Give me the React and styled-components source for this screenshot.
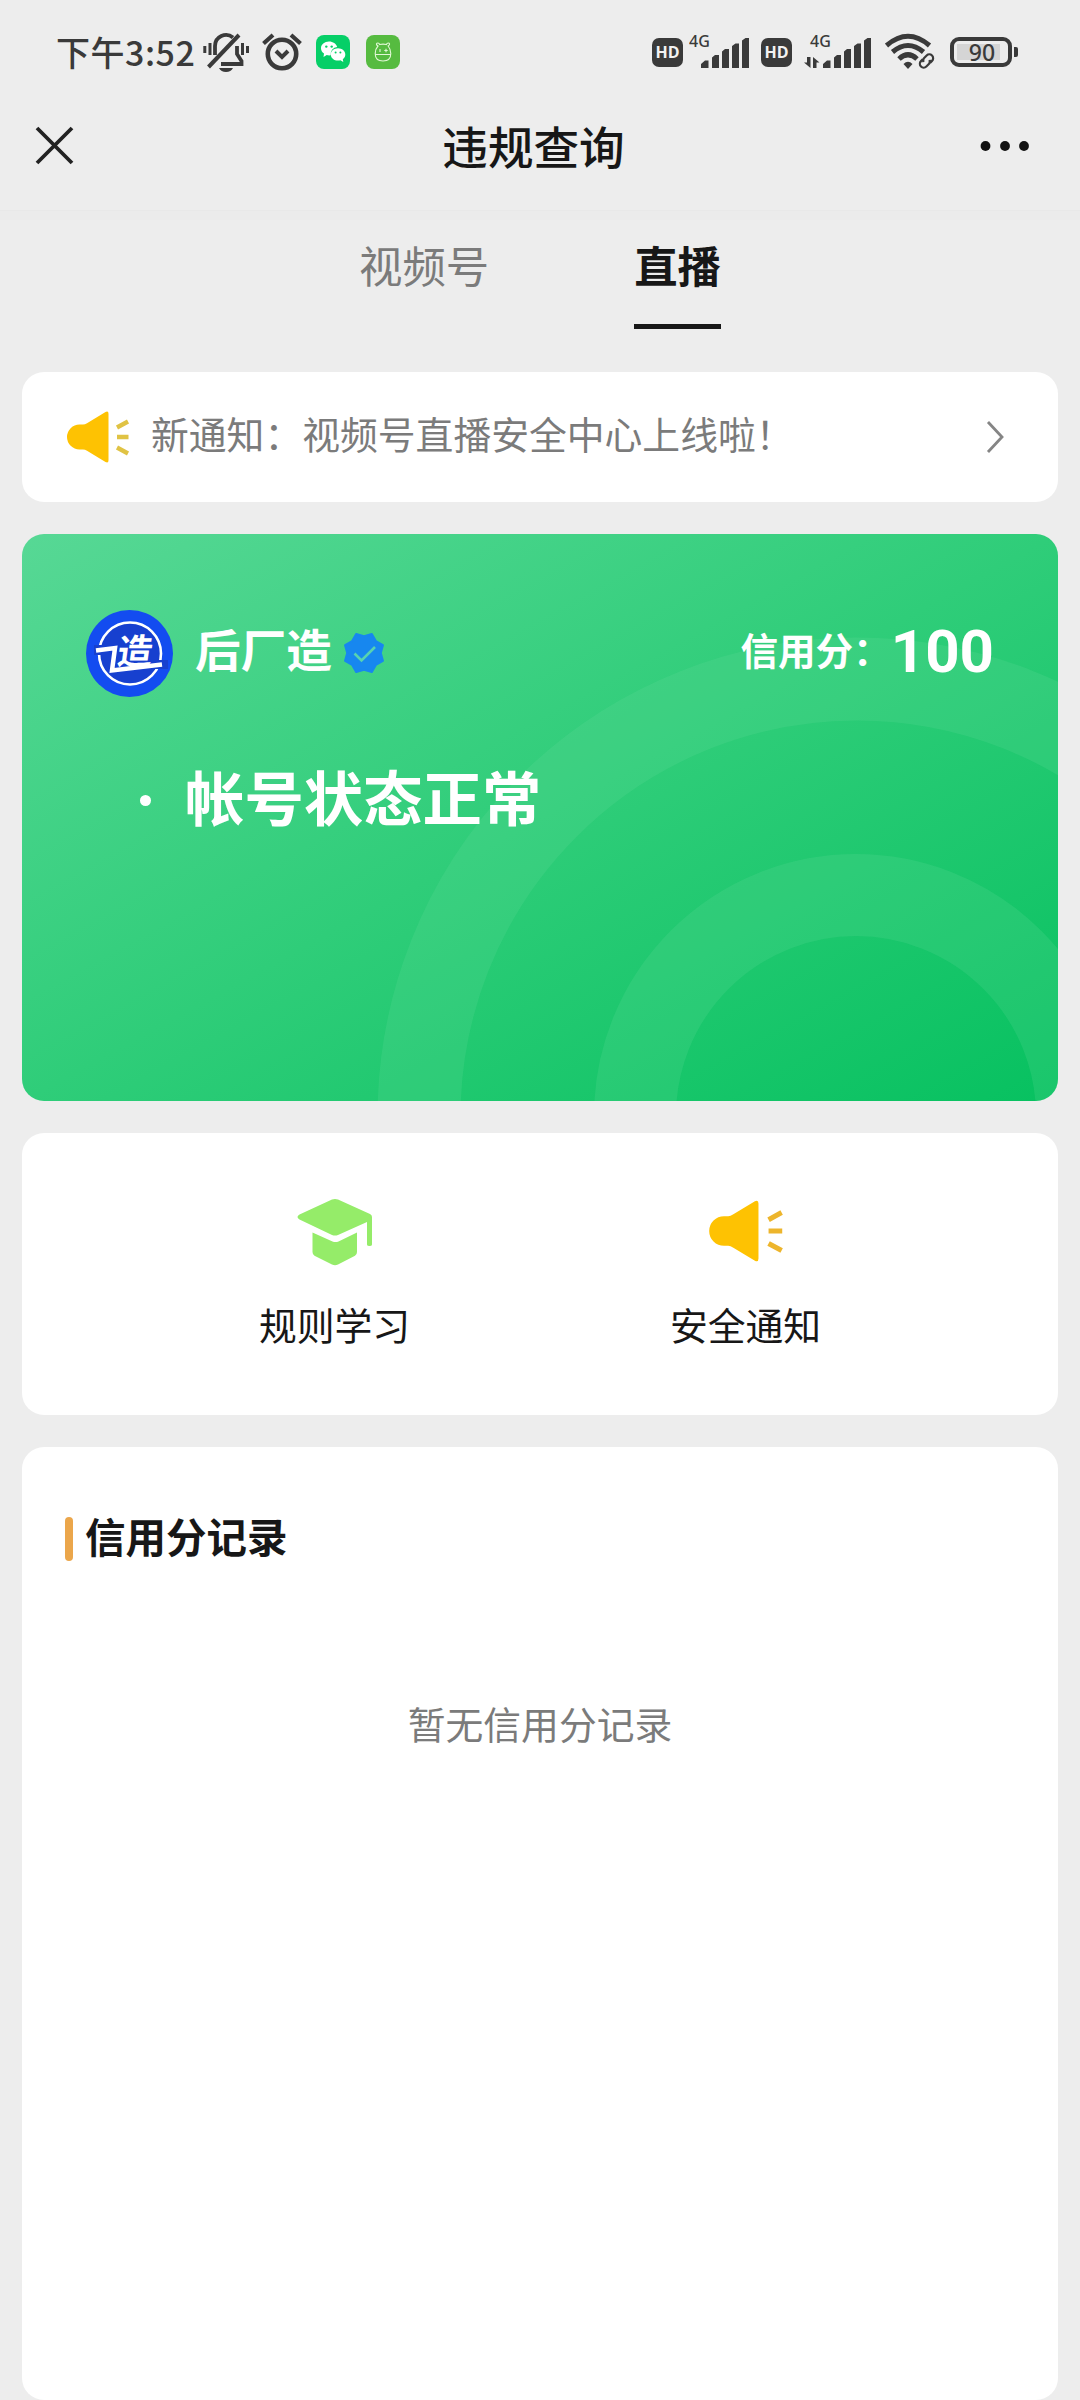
import React from "react";
import styled, { createGlobalStyle } from "styled-components";

const GlobalStyle = createGlobalStyle`
  * {
    box-sizing: border-box;
  }

  body {
    margin: 0;
    background-color: #ededed;
    font-family: "Noto Sans CJK SC", sans-serif;
    color: #171717;
  }
`;

const Page = styled.div`
  width: 1080px;
  height: 2400px;
  overflow: hidden;
  background-color: #ededed;
`;

const StatusBar = styled.div`
  display: flex;
  justify-content: space-between;
  height: 104px;
  padding: 0 62px 0 56px;
  color: #3a3a3a;
`;

const StatusGroup = styled.div`
  display: flex;
  align-items: center;
  height: 104px;
`;

const Time = styled.span`
  width: 147px;
  font-size: 34px;
  font-weight: 500;
  letter-spacing: 0.5px;
  line-height: 1;
  white-space: nowrap;
`;

const StatusIcon = styled.svg`
  display: block;
  flex: none;
  margin-left: ${({ $gap }) => $gap || 0}px;
`;

const HdBadge = styled.span`
  width: 31px;
  height: 29px;
  margin-left: ${({ $gap }) => $gap || 0}px;
  border-radius: 7px;
  background-color: #3a3a3a;
  color: #f2f2f2;
  font-family: "Open Sans", sans-serif;
  font-size: 16px;
  font-weight: 700;
  line-height: 29px;
  text-align: center;
`;

const Battery = styled.span`
  width: 62px;
  height: 30px;
  margin-left: 15px;
  padding: 3px 7px 3px 3px;
  border: 4px solid #3a3a3a;
  border-radius: 9px;
`;

const BatteryLevel = styled.span`
  display: block;
  width: 50px;
  height: 16px;
  background: linear-gradient(90deg, #d5d5d5 43px, transparent 43px);
  font-family: "Noto Sans", sans-serif;
  font-size: 23px;
  font-weight: 500;
  line-height: 16px;
  text-align: center;
`;

const BatteryCap = styled.span`
  width: 4px;
  height: 10px;
  margin-left: 2px;
  border-radius: 0 2px 2px 0;
  background-color: #3a3a3a;
`;

const NavBar = styled.header`
  display: flex;
  align-items: center;
  justify-content: space-between;
  height: 106px;
  padding: 0 50px 23px 35px;
`;

const NavTitle = styled.h1`
  margin: 0 0 0 13px;
  font-size: 45.6px;
  font-weight: 500;
  line-height: 1;
`;

const Divider = styled.div`
  height: 10px;
  border-top: 1px solid #e8e8e8;
  background-color: #ebebeb;
`;

const Tabs = styled.nav`
  display: flex;
  justify-content: center;
  gap: 145px;
  height: 152px;
  padding-top: 23px;
`;

const Tab = styled.div`
  height: 86px;
  border-bottom: 5px solid ${({ $active }) => ($active ? "#171717" : "transparent")};
  color: ${({ $active }) => ($active ? "#171717" : "#7b7b7b")};
  font-size: 43.4px;
  font-weight: ${({ $active }) => ($active ? 700 : 400)};
  line-height: 43px;
`;

const Content = styled.main`
  display: flex;
  flex-direction: column;
  gap: 32px;
  padding: 0 22px;
`;

const Card = styled.section`
  border-radius: 22px;
  background-color: #fff;
`;

const Notice = styled(Card)`
  display: flex;
  align-items: center;
  height: 130px;
  padding: 0 53px 0 44px;
`;

const NoticeText = styled.p`
  flex: 1;
  margin: 0 0 8px 21px;
  color: #7b7b7b;
  font-size: 37.8px;
  line-height: 1;
`;

const StatusCard = styled(Card)`
  position: relative;
  height: 567px;
  padding: 73px 64px 0 64px;
  overflow: hidden;
  background: linear-gradient(to bottom right, #57d895 0%, #2fcd79 50%, #07c160 100%);
  color: #fff;
`;

const Rings = styled.svg`
  position: absolute;
  inset: 0;
`;

const Account = styled.div`
  position: relative;
  display: flex;
  align-items: center;
  height: 92px;
`;

const AccountName = styled.span`
  margin: 0 11px 8px 22px;
  font-size: 45.6px;
  font-weight: 700;
  line-height: 1;
`;

const ScoreLabel = styled.span`
  margin: 0 0 9px auto;
  font-size: 37.6px;
  font-weight: 700;
  line-height: 1;
`;

const Score = styled.span`
  margin-bottom: 2px;
  font-family: Roboto, sans-serif;
  font-size: 60px;
  font-weight: 700;
  line-height: 1;
`;

const AccountStatus = styled.div`
  position: relative;
  display: flex;
  align-items: center;
  gap: 34px;
  margin: 58px 0 0 54px;
  font-size: 59.4px;
  font-weight: 700;
  line-height: 76px;
`;

const Dot = styled.span`
  width: 11px;
  height: 11px;
  margin-top: 10px;
  border-radius: 50%;
  background-color: #fff;
`;

const Menu = styled(Card)`
  display: flex;
  height: 282px;
  padding: 63px 107px 0;
`;

const MenuItem = styled.div`
  display: flex;
  flex: 1;
  flex-direction: column;
  align-items: center;
  gap: 28px;
  font-size: 37.8px;
  line-height: 60px;
`;

const Records = styled(Card)`
  height: 953px;
  padding: 64px 43px 0;
`;

const RecordsTitle = styled.h2`
  display: flex;
  align-items: center;
  gap: 12px;
  margin: 0;
  font-size: 40.5px;
  font-weight: 700;
  line-height: 50px;
`;

const Marker = styled.span`
  width: 8px;
  height: 44px;
  margin-top: 6px;
  border-radius: 4px;
  background-color: #eba64b;
`;

const Empty = styled.p`
  margin: 134px 0 0;
  color: #7b7b7b;
  font-size: 37.8px;
  line-height: 56px;
  text-align: center;
`;

function MutedBell() {
  return (
    <StatusIcon width="46" height="40" viewBox="0 0 46 40" fill="none" stroke="#3a3a3a" strokeWidth="3.8">
      <path d="M12 23V14a11 11 0 0 1 18-8.500M34 14v8l4.500 7v3H18" />
      <path d="M5.500 35 36 3" strokeWidth="4" />
      <path d="M1.800 14v7M7 11v12M39.500 11v12M44.500 14v7" strokeWidth="3" />
      <path d="M16 36h14q-2 4-7 4t-7-4Z" fill="#3a3a3a" stroke="none" />
    </StatusIcon>
  );
}

function AlarmClock() {
  return (
    <StatusIcon $gap={13} width="40" height="38" viewBox="0 0 40 38" fill="none" stroke="#3a3a3a">
      <circle cx="20" cy="21" r="14.200" strokeWidth="4.600" />
      <path d="M1.500 10.500 11 2M38.500 10.500 29 2" strokeWidth="4.200" />
      <path d="m14 18 6 6 6-6" strokeWidth="4" />
    </StatusIcon>
  );
}

function ChatApp() {
  return (
    <StatusIcon $gap={14} width="34" height="34" viewBox="0 0 34 34">
      <rect width="34" height="34" rx="8" fill="#06cf67" />
      <path d="M13 6.500C8.500 6.500 5 9.500 5 13.200c0 2.200 1.100 4.100 3 5.300L7.500 22l3.200-1.900c1.200.3 2.800.4 4 .2A7 7 0 0 1 21.200 12C20.200 8.800 17 6.500 13 6.500Z" fill="#fff" />
      <path d="M22 13.200c-4 0-7.200 2.800-7.200 6.200s3.200 6.200 7.200 6.200c.8 0 1.700-.1 2.400-.4l2.900 1.700-.5-2.700c1.500-1.200 2.500-2.900 2.500-4.800 0-3.400-3.300-6.200-7.300-6.200Z" fill="#fff" />
      <g fill="#06cf67">
        <circle cx="10.300" cy="11.600" r="1.200" />
        <circle cx="15.700" cy="11.600" r="1.200" />
        <circle cx="19.600" cy="17.600" r="1" />
        <circle cx="24.400" cy="17.600" r="1" />
      </g>
    </StatusIcon>
  );
}

function BearApp() {
  return (
    <StatusIcon $gap={16} width="34" height="34" viewBox="0 0 34 34">
      <rect width="34" height="34" rx="8" fill="#56bb40" />
      <g fill="none" stroke="#e2f8d6" strokeWidth="1.100">
        <path d="M12 11q-2.500-1.500-1-2.800 2-.6 2.600 1.300 3.500-.8 6.800 0 .8-1.900 2.700-1.300 1.300 1.400-1 2.800 2.700 3 2.700 7.500c0 5-3.300 7.500-7.800 7.500s-7.800-2.500-7.800-7.500q0-4.500 2.800-7.500ZM9.500 19.500h15" />
        <path d="M14 14v3M20 13.800v3.400M18.300 15.500h3.400" />
      </g>
    </StatusIcon>
  );
}

function Signal({ gap, data }) {
  const left = data ? 19 : 12;
  return (
    <StatusIcon $gap={gap} width={left + 48} height="52" viewBox={`0 -9 ${left + 48} 52`} fill="#3a3a3a">
      <text x={data ? 6 : 0} y="12" fontFamily="Noto Sans" fontSize="16" fontWeight="500">
        4G
      </text>
      {data && (
        <path d="M6.500 33 0 27.500h3V22h3.500ZM9 33V22l6.500 5.500h-3V33Z" />
      )}
      <g transform={`translate(${left} 0)`}>
        <path d="M0 33v-4l4-3.500h3.500V33ZM11 33V22.500l3-2.500h4v13ZM21 33V16.500l3-2.500h4v19ZM31 33V11l3.500-2.500H38V33ZM41 33V5.500L44.500 3H48v30Z" />
      </g>
    </StatusIcon>
  );
}

function Wifi() {
  return (
    <StatusIcon $gap={14} width="50" height="38" viewBox="0 0 50 38" fill="none" stroke="#3a3a3a">
      <path d="M1.500 12.500Q23-6 44.500 12.500" strokeWidth="5" />
      <path d="M7.500 19q15.500-13 31 0" strokeWidth="5" />
      <path d="M14 26q9-8.500 18 0" strokeWidth="5" />
      <path d="M18.500 31q4.500-4.500 9 0L23 36Z" fill="#3a3a3a" stroke="none" />
      <g strokeWidth="2.200" transform="rotate(-45 41.500 28)">
        <path d="M40 24.200h-2.500a3.800 3.800 0 0 0 0 7.600h3.500q2.500 0 3.200-2.500M43 31.800h2.500a3.800 3.800 0 0 0 0-7.600H42q-2.500 0-3.200 2.500" />
      </g>
    </StatusIcon>
  );
}

function CloseIcon() {
  return (
    <svg width="39" height="39" viewBox="0 0 39 39" stroke="#222" strokeWidth="3.800">
      <path d="m2 2 35 35M37 2 2 37" />
    </svg>
  );
}

function MoreIcon() {
  return (
    <svg width="50" height="12" viewBox="0 0 50 12" fill="#111">
      <circle cx="5.500" cy="6" r="4.900" />
      <circle cx="25" cy="6" r="4.900" />
      <circle cx="44" cy="6" r="4.900" />
    </svg>
  );
}

function Megaphone({ width, height, rays }) {
  return (
    <svg width={width} height={height} viewBox="0 0 64 52" fill="none">
      <path
        d="M13.500 13.500H17q2 0 4-1.300L39.500 1q3-1.500 3 1.800v46.400q0 3.300-3 1.800L21 39.800q-2-1.300-4-1.300h-3.500a12.500 12.500 0 0 1 0-25Z"
        fill="#fec202"
      />
      <path d="m51 16.500 11-6M51 26h11.500M51 36.500l11 6" stroke={rays} strokeWidth="4.300" />
    </svg>
  );
}

function Avatar() {
  return (
    <svg width="87" height="87" viewBox="0 0 87 87">
      <circle cx="43.500" cy="43.500" r="43.500" fill="#134cf0" />
      <circle cx="44" cy="43.500" r="31" fill="#1740cf" stroke="#fff" strokeWidth="2.600" />
      {/* gaps where the tail strokes leave the ring */}
      <path d="M8 35h13v10H8ZM64 50h18v9H64Z" fill="#1740cf" />
      <path d="M10 40.500 29 38 26 60.500 76 54.500" fill="none" stroke="#fff" strokeWidth="4.500" />
      <text
        transform="translate(30 54) skewX(-8)"
        fill="#fff"
        fontFamily="Noto Sans CJK SC"
        fontSize="35"
        fontWeight="700"
      >
        造
      </text>
    </svg>
  );
}

function VerifiedBadge() {
  // eight teeth, with a notch at the top
  const points = Array.from({ length: 16 }, (_, i) => {
    const r = i % 2 ? 20.5 : 16.8;
    const angle = (i * Math.PI) / 8;
    return `${21 + r * Math.sin(angle)},${21 - r * Math.cos(angle)}`;
  }).join(" ");

  return (
    <svg width="42" height="42" viewBox="0 0 42 42">
      <polygon points={points} fill="#1787ef" stroke="#1787ef" strokeWidth="2" strokeLinejoin="round" />
      <path d="m11.500 21.500 7 7L32 15" fill="none" stroke="#57d2b0" strokeWidth="2.600" />
    </svg>
  );
}

function Chevron() {
  return (
    <svg width="20" height="34" viewBox="0 0 20 34" fill="none" stroke="#858585" strokeWidth="2.800">
      <path d="m3 2 14 15L3 32" />
    </svg>
  );
}

function GraduationCap() {
  return (
    <svg width="76" height="70" viewBox="0 0 76 70" fill="#95ec69">
      <path d="M35 3.500q3-1.200 6 0L73 18q2 1 2 3v27.500q0 1.500-2.500 1.500T70 48.500V26L41 39q-3 1.200-6 0L2.500 23.500q-4-2.500 0-5Z" />
      <path d="m15.500 36.500 20 9q3 1.200 6 0l18.500-9V56q0 2.500-2 3.700L41 68.500q-3 1.300-6 0L17.500 59.700q-2-1.200-2-3.700Z" />
    </svg>
  );
}

export default function App() {
  return (
    <Page>
      <GlobalStyle />
      <StatusBar>
        <StatusGroup>
          <Time>下午3:52</Time>
          <MutedBell />
          <AlarmClock />
          <ChatApp />
          <BearApp />
        </StatusGroup>
        <StatusGroup>
          <HdBadge>HD</HdBadge>
          <Signal gap={6} />
          <HdBadge $gap={12}>HD</HdBadge>
          <Signal gap={12} data />
          <Wifi />
          <Battery>
            <BatteryLevel>90</BatteryLevel>
          </Battery>
          <BatteryCap />
        </StatusGroup>
      </StatusBar>

      <NavBar>
        <CloseIcon />
        <NavTitle>违规查询</NavTitle>
        <MoreIcon />
      </NavBar>
      <Divider />

      <Tabs>
        <Tab>视频号</Tab>
        <Tab $active>直播</Tab>
      </Tabs>

      <Content>
        <Notice>
          <Megaphone width={64} height={52} rays="#e0c344" />
          <NoticeText>新通知：视频号直播安全中心上线啦！</NoticeText>
          <Chevron />
        </Notice>

        <StatusCard>
          <Rings width="1036" height="567" fill="none" stroke="#6ee09f" strokeOpacity="0.180">
            <circle cx="835" cy="583" r="438" strokeWidth="83" />
            <circle cx="834" cy="582" r="221" strokeWidth="82" />
          </Rings>
          <Account>
            <Avatar />
            <AccountName>后厂造</AccountName>
            <VerifiedBadge />
            <ScoreLabel>信用分：</ScoreLabel>
            <Score>100</Score>
          </Account>
          <AccountStatus>
            <Dot />
            帐号状态正常
          </AccountStatus>
        </StatusCard>

        <Menu>
          <MenuItem>
            <GraduationCap />
            规则学习
          </MenuItem>
          <MenuItem>
            <Megaphone width={76} height={70} rays="#edb52c" />
            安全通知
          </MenuItem>
        </Menu>

        <Records>
          <RecordsTitle>
            <Marker />
            信用分记录
          </RecordsTitle>
          <Empty>暂无信用分记录</Empty>
        </Records>
      </Content>
    </Page>
  );
}
